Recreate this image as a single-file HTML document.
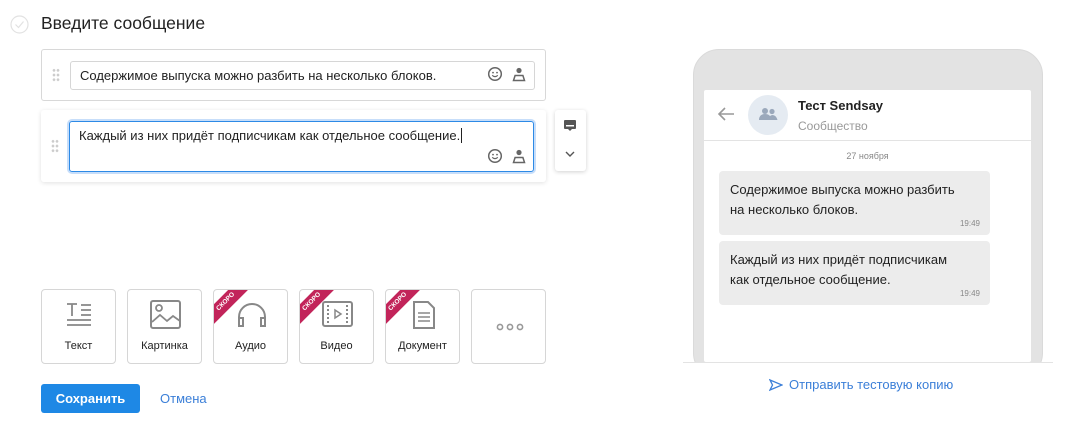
<!DOCTYPE html>
<html><head><meta charset="utf-8"><style>
*{box-sizing:border-box;margin:0;padding:0}
body{width:1088px;height:430px;background:#fff;font-family:"Liberation Sans","DejaVu Sans",sans-serif;color:#222;position:relative;overflow:hidden}
.abs{position:absolute}
.title{left:41px;top:13px;font-size:17.5px;color:#222}
.blk{left:41px;width:505px;border-radius:3px}
.inp{position:absolute;border-radius:3px;font-size:13px;color:#222;padding:0 9px}
.dots{position:absolute;width:8px;height:14px;background:radial-gradient(circle,#ccc 1.2px,transparent 1.5px) 0 0/4px 4.7px}
.tile{top:289px;width:75px;height:75px;border:1px solid #d6d6d6;border-radius:4px;font-size:11px;text-align:center;color:#222;overflow:hidden}
.tile .lb{position:absolute;left:0;right:0;top:50px}
.tile svg{position:absolute;left:22px;top:10px}
.rib{position:absolute;left:-14px;top:5px;width:52px;height:14px;background:#c2245a;color:#fff;font-size:6.5px;font-weight:bold;line-height:14px;transform:rotate(-45deg);text-align:center}
.bub{position:absolute;left:15px;width:271px;height:64px;background:#ececec;border-radius:4px;padding:9px 11px;font-size:13px;line-height:20px;white-space:nowrap}
</style></head><body>
<svg class="abs" style="left:10px;top:15px" width="19" height="19"><circle cx="9.5" cy="9.5" r="8.5" fill="none" stroke="#e2e2e2" stroke-width="1.2"/><path d="M5.5 9.5l3 3 5-6" fill="none" stroke="#e2e2e2" stroke-width="1.2"/></svg>
<div class="abs title">Введите сообщение</div>

<div class="abs blk" style="top:49px;height:52px;border:1px solid #d8d8d8">
 <div class="dots" style="left:10px;top:18px"></div>
 <div class="inp" style="left:28px;top:11px;width:465px;height:29px;border:1px solid #d6d6d6;line-height:27px">Содержимое выпуска можно разбить на несколько блоков.</div>
</div>
<div class="abs blk" style="top:110px;height:72px;box-shadow:0 1px 5px rgba(0,0,0,.12)">
 <div class="dots" style="left:10px;top:29px"></div>
 <div class="inp" style="left:28px;top:11px;width:465px;height:51px;border:1px solid #2d8ae6;box-shadow:0 0 0 2px #c7defa;padding-top:6px;line-height:16px">Каждый из них придёт подписчикам как отдельное сообщение.<span style="border-left:1px solid #222;margin-left:1px"></span></div>
</div>
<svg class="abs" style="left:487px;top:66px" width="42" height="18"><circle cx="8" cy="8" r="6.3" fill="none" stroke="#666" stroke-width="1.5"/><circle cx="6" cy="6.6" r=".9" fill="#666"/><circle cx="10" cy="6.6" r=".9" fill="#666"/><path d="M5.2 9.3q2.8 2.6 5.6 0" fill="none" stroke="#666" stroke-width="1.2"/><circle cx="32" cy="4.5" r="2.6" fill="#666"/><path d="M26.5 14.5h11l-1.6-5h-7.8z" fill="none" stroke="#666" stroke-width="1.5"/></svg>
<svg class="abs" style="left:487px;top:148px" width="42" height="18"><circle cx="8" cy="8" r="6.3" fill="none" stroke="#666" stroke-width="1.5"/><circle cx="6" cy="6.6" r=".9" fill="#666"/><circle cx="10" cy="6.6" r=".9" fill="#666"/><path d="M5.2 9.3q2.8 2.6 5.6 0" fill="none" stroke="#666" stroke-width="1.2"/><circle cx="32" cy="4.5" r="2.6" fill="#666"/><path d="M26.5 14.5h11l-1.6-5h-7.8z" fill="none" stroke="#666" stroke-width="1.5"/></svg>
<div class="abs" style="left:555px;top:110px;width:31px;height:61px;box-shadow:0 1px 4px rgba(0,0,0,.18);border-radius:3px">
 <svg class="abs" style="left:9px;top:10px" width="13" height="11"><rect x="0" y="0" width="12" height="9" rx="1" fill="#555"/><path d="M4 9l2 2 2-2" fill="#555"/><rect x="2" y="5" width="8" height="1.5" fill="#fff"/></svg>
 <svg class="abs" style="left:10px;top:40px" width="11" height="8"><path d="M1 2l4 4 4-4" fill="none" stroke="#555" stroke-width="1.4"/></svg>
</div>

<div class="abs tile" style="left:41px"><svg width="30" height="28"><path d="M3 4h10M8 4v12M17 5h10M17 10h10M17 15h10M3 20h24M3 25h24" stroke="#888" stroke-width="1.8" fill="none"/></svg><div class="lb">Текст</div></div>
<div class="abs tile" style="left:127px"><svg width="32" height="30"><rect x="1" y="1" width="29" height="27" rx="2" fill="none" stroke="#888" stroke-width="2"/><circle cx="9" cy="8" r="3" fill="none" stroke="#888" stroke-width="1.8"/><path d="M2 22l8-7 7 6 6-5 7 5" fill="none" stroke="#888" stroke-width="1.8"/></svg><div class="lb">Картинка</div></div>
<div class="abs tile" style="left:213px"><div class="rib">СКОРО</div><svg width="32" height="30"><path d="M3 26V17a13 13 0 0126 0v9" fill="none" stroke="#888" stroke-width="2"/><rect x="3" y="18" width="4" height="8" fill="none" stroke="#888" stroke-width="2"/><rect x="25" y="18" width="4" height="8" fill="none" stroke="#888" stroke-width="2"/></svg><div class="lb">Аудио</div></div>
<div class="abs tile" style="left:299px"><div class="rib">СКОРО</div><svg width="32" height="30"><rect x="1" y="2" width="29" height="24" rx="2" fill="none" stroke="#888" stroke-width="2"/><path d="M6 5v18M25 5v18" stroke="#888" stroke-width="2" stroke-dasharray="2 2"/><path d="M13 10l6 4-6 4z" fill="none" stroke="#888" stroke-width="1.5"/></svg><div class="lb">Видео</div></div>
<div class="abs tile" style="left:385px"><div class="rib">СКОРО</div><svg width="32" height="30"><path d="M6 2h14l6 6v20H6z" fill="none" stroke="#888" stroke-width="2"/><path d="M10 13h12M10 17h12M10 21h12" stroke="#888" stroke-width="1.6"/></svg><div class="lb">Документ</div></div>
<div class="abs tile" style="left:471px"><svg style="left:24px;top:33px" width="28" height="8"><circle cx="4" cy="4" r="2.6" fill="none" stroke="#999" stroke-width="1.6"/><circle cx="14" cy="4" r="2.6" fill="none" stroke="#999" stroke-width="1.6"/><circle cx="24" cy="4" r="2.6" fill="none" stroke="#999" stroke-width="1.6"/></svg></div>

<div class="abs" style="left:41px;top:384px;width:99px;height:29px;background:#1e88e5;border-radius:3px;color:#fff;font-weight:bold;font-size:13px;text-align:center;line-height:29px">Сохранить</div>
<div class="abs" style="left:160px;top:391px;font-size:13px;color:#3b7fd8">Отмена</div>

<div class="abs" style="left:693px;top:49px;width:350px;height:330px;background:#e3e3e3;border:1px solid #dadada;border-radius:26px"></div>
<div class="abs" style="left:704px;top:90px;width:327px;height:272px;background:#fff;border-radius:2px">
 <svg class="abs" style="left:12px;top:16px" width="20" height="16"><path d="M18 8H3M9 2L3 8l6 6" fill="none" stroke="#999" stroke-width="1.6"/></svg>
 <div class="abs" style="left:44px;top:5px;width:40px;height:40px;border-radius:50%;background:#e5ebf2"></div>
 <svg class="abs" style="left:55px;top:16px" width="20" height="16"><circle cx="6" cy="5" r="3" fill="#9aa8bb"/><circle cx="13" cy="5.5" r="2.6" fill="#9aa8bb"/><path d="M0 14q0-6 6-6t6 6z" fill="#9aa8bb"/><path d="M10 14q0-5 3.5-5t5 5z" fill="#9aa8bb"/></svg>
 <div class="abs" style="left:94px;top:8px;font-size:13px;font-weight:bold;color:#222">Тест Sendsay</div>
 <div class="abs" style="left:94px;top:29px;font-size:12px;color:#999">Сообщество</div>
 <div class="abs" style="left:0;top:50px;width:327px;height:1px;background:#e3e3e3"></div>
 <div class="abs" style="left:0;width:327px;top:61px;text-align:center;font-size:9px;color:#888">27 ноября</div>
 <div class="bub" style="top:81px">Содержимое выпуска можно разбить<br>на несколько блоков.<div class="abs" style="right:10px;bottom:6px;font-size:8px;color:#888;line-height:10px">19:49</div></div>
 <div class="bub" style="top:151px">Каждый из них придёт подписчикам<br>как отдельное сообщение.<div class="abs" style="right:10px;bottom:6px;font-size:8px;color:#888;line-height:10px">19:49</div></div>
</div>
<div class="abs" style="left:683px;top:362px;width:370px;height:68px;background:#fff;border-top:1px solid #e3e3e3"></div>
<svg class="abs" style="left:769px;top:378px" width="14" height="14"><path d="M1 2l12 5-12 5 2.5-5z" fill="none" stroke="#3b7fd8" stroke-width="1.3"/></svg>
<div class="abs" style="left:789px;top:377px;font-size:13px;color:#3b7fd8">Отправить тестовую копию</div>
</body></html>
